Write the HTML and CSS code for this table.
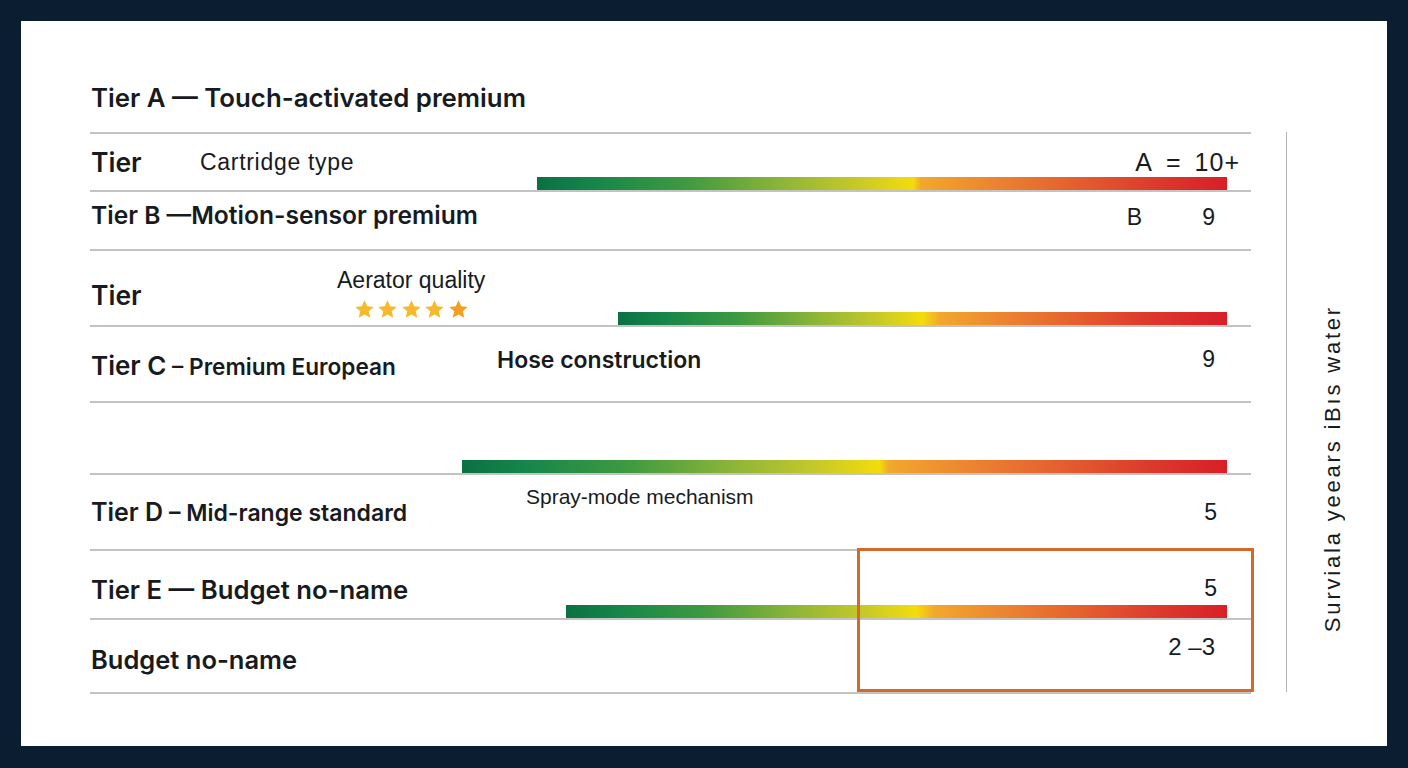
FILE: index.html
```html
<!DOCTYPE html>
<html lang="en">
<head>
<meta charset="utf-8">
<title>Tier survival chart</title>
<link rel="stylesheet" href="styles.css">
</head>
<body>
<div class="card">
  <div class="chart">
    <h1 class="title">Tier A — Touch-activated premium</h1>
    <div class="rows">
      <div class="row r1">
        <div class="line">
          <span class="label lw-1">Tier</span>
          <span class="mid mid-cart">Cartridge type</span>
          <span class="val val-a"><span>A</span><span>=</span><span>10+</span></span>
        </div>
        <div class="bar" style="margin-left:447px;width:690px;--y:54.5%;--o:55.6%"></div>
      </div>
      <div class="row r2">
        <div class="line">
          <span class="label lb-2">Tier B —Motion-sensor premium</span>
          <span class="val val-pair"><span>B</span><span>9</span></span>
        </div>
      </div>
      <div class="row r3">
        <div class="line">
          <span class="label lw-3">Tier</span>
          <div class="stack">
            <span class="mid mid-aer">Aerator quality</span>
            <div class="stars">
              <svg viewBox="0 0 24 24" class="star"><path d="M12 1.5l3.1 6.9 7.4.7-5.6 5 1.7 7.4L12 17.6l-6.6 3.9 1.7-7.4-5.6-5 7.4-.7z"/></svg>
              <svg viewBox="0 0 24 24" class="star"><path d="M12 1.5l3.1 6.9 7.4.7-5.6 5 1.7 7.4L12 17.6l-6.6 3.9 1.7-7.4-5.6-5 7.4-.7z"/></svg>
              <svg viewBox="0 0 24 24" class="star"><path d="M12 1.5l3.1 6.9 7.4.7-5.6 5 1.7 7.4L12 17.6l-6.6 3.9 1.7-7.4-5.6-5 7.4-.7z"/></svg>
              <svg viewBox="0 0 24 24" class="star"><path d="M12 1.5l3.1 6.9 7.4.7-5.6 5 1.7 7.4L12 17.6l-6.6 3.9 1.7-7.4-5.6-5 7.4-.7z"/></svg>
              <svg viewBox="0 0 24 24" class="star star-last"><path d="M12 1.5l3.1 6.9 7.4.7-5.6 5 1.7 7.4L12 17.6l-6.6 3.9 1.7-7.4-5.6-5 7.4-.7z"/></svg>
            </div>
          </div>
        </div>
        <div class="bar" style="margin-left:528px;width:609px;--y:50%;--o:52.8%"></div>
      </div>
      <div class="row r4">
        <div class="line">
          <span class="label lw-4"><span class="big">Tier C</span><span class="sub"> – Premium European</span></span>
          <span class="mid mid-hose">Hose construction</span>
          <span class="val">9</span>
        </div>
      </div>
      <div class="row r5">
        <div class="bar" style="margin-left:372px;width:765px;--y:54.6%;--o:55.8%"></div>
      </div>
      <div class="row r6">
        <div class="line">
          <span class="label lw-6"><span class="big-d">Tier D</span> – Mid-range standard</span>
          <span class="mid mid-spray">Spray-mode mechanism</span>
          <span class="val">5</span>
        </div>
      </div>
      <div class="row r7">
        <div class="line">
          <span class="label lb-7">Tier E —&nbsp;Budget no-name</span>
          <span class="val">5</span>
        </div>
        <div class="bar" style="margin-left:476px;width:661px;--y:53%;--o:55.7%"></div>
      </div>
      <div class="row r8">
        <div class="line">
          <span class="label lb-8">Budget no-name</span>
          <span class="val">2&nbsp;–3</span>
        </div>
      </div>
    </div>
    <div class="highlight"></div>
  </div>
  <div class="axis">
    <span class="axis-label">Surviala yeears iBıs water</span>
  </div>
</div>
</body>
</html>
```

FILE: styles.css
```css
html, body {
  margin: 0;
  padding: 0;
}

body {
  width: 1408px;
  height: 768px;
  overflow: hidden;
  background: #0b1d31;
  font-family: "Liberation Sans", Arial, sans-serif;
  color: #171b21;
}

.card {
  margin: 21px;
  width: 1366px;
  height: 725px;
  box-sizing: border-box;
  padding-left: 69px;
  background: #ffffff;
  display: flex;
  align-items: flex-start;
}

.chart {
  position: relative;
  width: 1161px;
  flex: none;
}

.title {
  margin: 0;
  height: 111px;
  box-sizing: border-box;
  padding: 62px 0 0 1px;
  font-family: Inter, "Liberation Sans", Arial, sans-serif;
  font-size: 25.8px;
  line-height: 30px;
  font-weight: 600;
}

.row {
  display: flex;
  flex-direction: column;
  box-sizing: border-box;
  border-top: 2px solid #c3c3c3;
}

.row:last-child {
  border-bottom: 2px solid #c3c3c3;
}

.r1 { height: 58px; }
.r2 { height: 59px; }
.r3 { height: 76px; }
.r4 { height: 76px; }
.r5 { height: 72px; }
.r6 { height: 76px; }
.r7 { height: 69px; }
.r8 { height: 76px; }

.line {
  display: flex;
  align-items: center;
  padding-left: 1px;
  padding-right: 36px;
}

.label {
  flex: none;
  font-family: Inter, "Liberation Sans", Arial, sans-serif;
  font-size: 25px;
  line-height: 28px;
  font-weight: 600;
  white-space: nowrap;
}

.mid {
  font-size: 22px;
  line-height: 24px;
  font-weight: 400;
  white-space: nowrap;
}

.mid-cart {
  font-size: 23px;
  letter-spacing: 0.7px;
}

.mid-aer {
  font-size: 23px;
}

.mid-hose {
  font-family: Inter, "Liberation Sans", Arial, sans-serif;
  font-size: 23px;
  font-weight: 600;
  margin-bottom: 8px;
}

.mid-spray {
  font-size: 21px;
  margin-bottom: 30px;
}

.val {
  margin-left: auto;
  font-size: 23px;
  line-height: 26px;
  font-weight: 400;
  white-space: nowrap;
}

/* row 1 */
.r1 .line {
  height: 28px;
  margin-top: 14px;
  padding-right: 11px;
}
.lw-1 {
  width: 109px;
  font-size: 26.5px;
}
.val-a {
  display: flex;
  gap: 13px;
  font-size: 25px;
  letter-spacing: 1px;
}

/* row 2 */
.r2 .line {
  height: 28px;
  margin-top: 9px;
}
.lb-2 {
  font-size: 24.6px;
}
.val-pair {
  display: flex;
  gap: 60px;
  margin-bottom: -4px;
}

/* row 3 */
.r3 .line {
  height: 61px;
  align-items: flex-start;
}
.lw-3 {
  width: 246px;
  font-size: 26.5px;
  align-self: flex-end;
  margin-bottom: 3px;
}
.stack {
  display: flex;
  flex-direction: column;
  align-items: center;
  padding-top: 17px;
}
.stars {
  display: flex;
  gap: 2.5px;
  margin-top: 7px;
}
.star {
  width: 21px;
  height: 21px;
  fill: #f5b92c;
}
.star-last {
  fill: #f3a021;
}

/* row 4 */
.r4 .line {
  height: 74px;
}
.lw-4 {
  width: 406px;
  margin-top: 4px;
}
.big {
  font-size: 26px;
}
.sub {
  font-size: 22.6px;
}
.r4 .val {
  margin-bottom: 10px;
}

/* row 6 */
.r6 .line {
  height: 74px;
  padding-right: 34px;
}
.lw-6 {
  width: 435px;
  font-size: 23px;
}
.big-d {
  font-size: 25px;
}

/* row 7 */
.r7 .line {
  height: 53px;
  align-items: flex-end;
  padding-right: 34px;
}
.lb-7 {
  font-size: 25.7px;
}
.r7 .val {
  margin-bottom: 3px;
}

/* row 8 */
.r8 .line {
  height: 70px;
}
.lb-8 {
  font-size: 25.5px;
  margin-top: 10px;
}
.r8 .val {
  font-size: 24px;
  margin-bottom: 16px;
}

.bar {
  flex: none;
  height: 13px;
  margin-top: auto;
  background: linear-gradient(90deg,
    #0a7142 0%,
    #15864a calc(var(--y) * 0.15),
    #3f9a40 calc(var(--y) * 0.4),
    #8db538 calc(var(--y) * 0.65),
    #c6c928 calc(var(--y) * 0.85),
    #f3dc0c var(--y),
    #f2a82c var(--o),
    #ec8630 calc(var(--o) + 10%),
    #e35a2e calc(var(--o) + 24%),
    #dc3a2c calc(var(--o) + 34%),
    #d81f28 100%);
}

.highlight {
  position: absolute;
  left: 767px;
  top: 527px;
  width: 397px;
  height: 144px;
  box-sizing: border-box;
  border: 3px solid #d4692b;
  pointer-events: none;
}

.axis {
  flex: none;
  margin-left: 35px;
  margin-top: 111px;
  width: 92px;
  height: 560px;
  box-sizing: border-box;
  border-left: 1px solid #b3b3b3;
  display: flex;
  justify-content: center;
  align-items: flex-end;
  padding-bottom: 60px;
}

.axis-label {
  writing-mode: vertical-rl;
  transform: rotate(180deg);
  font-size: 22px;
  line-height: 26px;
  letter-spacing: 2.8px;
  white-space: nowrap;
}
```
